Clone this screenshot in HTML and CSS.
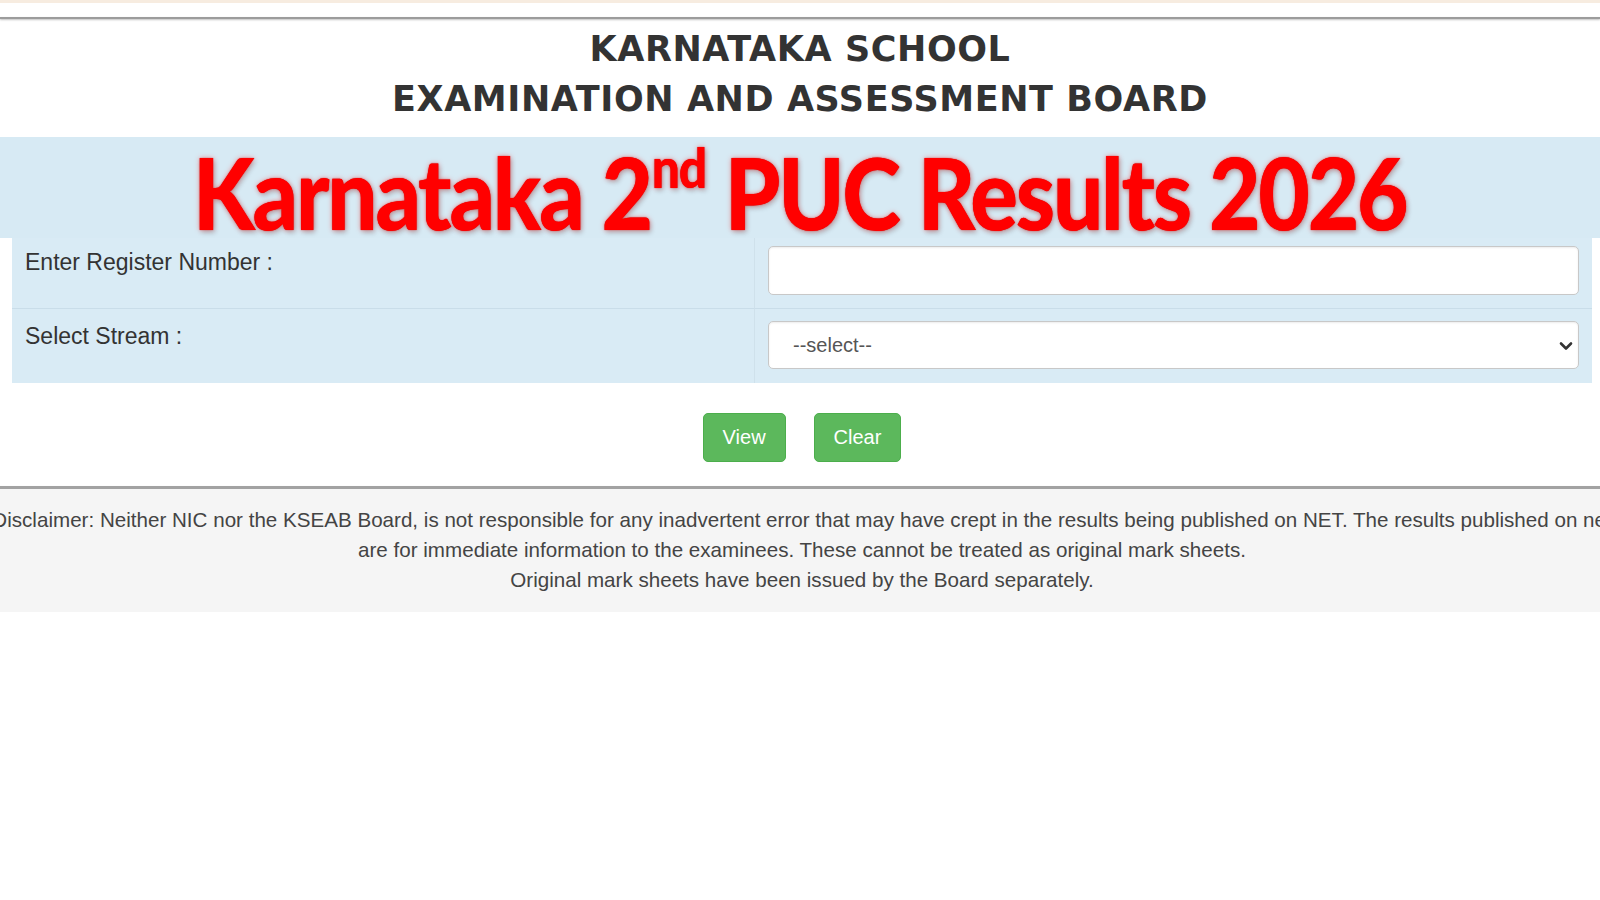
FILE: index.html
```html
<!DOCTYPE html>
<html lang="en">
<head>
<meta charset="utf-8">
<title>Karnataka 2nd PUC Results 2026</title>
<link rel="stylesheet" href="styles.css">
</head>
<body>
<div class="topstrip"></div>
<div class="topline"></div>
<header class="board">
  <div class="board-line">KARNATAKA SCHOOL</div>
  <div class="board-line">EXAMINATION AND ASSESSMENT BOARD</div>
</header>
<div class="band">
  <h1 class="title"><span class="title-text">Karnataka 2<sup class="sup">nd</sup> PUC Results 2026</span></h1>
</div>
<div class="form-table">
  <div class="row row-first">
    <div class="cell cell-label">Enter Register Number :</div>
    <div class="cell cell-field"><input class="field" type="text"></div>
  </div>
  <div class="row row-second">
    <div class="cell cell-label">Select Stream :</div>
    <div class="cell cell-field">
      <div class="select-wrap">
        <select class="field select"><option>--select--</option></select>
        <svg class="chev" width="14" height="10" viewBox="0 0 14 10"><path d="M2 2.5 L7 7.5 L12 2.5" fill="none" stroke="#333" stroke-width="2.6" stroke-linecap="round" stroke-linejoin="round"/></svg>
      </div>
    </div>
  </div>
</div>
<div class="actions">
  <button class="btn" type="button">View</button>
  <button class="btn" type="button">Clear</button>
</div>
<div class="sep"></div>
<footer class="disclaimer">
  <span class="dl">Disclaimer: Neither NIC nor the KSEAB Board, is not responsible for any inadvertent error that may have crept in the results being published on NET. The results published on net</span>
  <span class="dl">are for immediate information to the examinees. These cannot be treated as original mark sheets.</span>
  <span class="dl">Original mark sheets have been issued by the Board separately.</span>
</footer>
</body>
</html>
```
FILE: styles.css
```css
html, body {
  margin: 0;
  padding: 0;
  background: #ffffff;
  overflow-x: hidden;
}
body {
  font-family: "Liberation Sans", Arial, sans-serif;
  color: #333;
}
.topstrip {
  height: 3px;
  background: #f7ece0;
}
.topline {
  margin-top: 14px;
  height: 2px;
  background: #9c9c9c;
  box-shadow: 0 1px 2px rgba(0,0,0,0.25);
}
.board {
  height: 118px;
  box-sizing: border-box;
  padding-top: 5px;
  text-align: center;
  font-family: "DejaVu Sans", Verdana, sans-serif;
  font-weight: bold;
  font-size: 35px;
  letter-spacing: 0.6px;
  line-height: 50px;
  color: #333;
}
.band {
  height: 101px;
  box-sizing: border-box;
  padding-top: 4px;
  background: #d7eaf4;
  text-align: center;
}
.title {
  margin: 0;
  font-family: Lato, "Open Sans", sans-serif;
  font-weight: 900;
  font-size: 100px;
  line-height: 100px;
  color: #ff0000;
  white-space: nowrap;
}
.title-text {
  display: inline-block;
  letter-spacing: -2.5px;
  transform: scaleX(0.89);
  transform-origin: 50% 50%;
  text-shadow: 0 0 1px #c00000, 0 0 6px rgba(255,60,60,0.55), 2px 3px 6px rgba(0,0,0,0.18);
}
.sup {
  font-size: 56px;
  letter-spacing: -1.5px;
  vertical-align: 42px;
  line-height: 0;
  margin-left: 1px;
}
.form-table {
  margin: 0 8px 0 12px;
  background: #d9ebf5;
}
.row {
  display: grid;
  grid-template-columns: 743px 1fr;
}
.row-first .cell {
  height: 70px;
  box-sizing: border-box;
}
.row-second .cell {
  height: 75px;
  box-sizing: border-box;
  border-top: 1px solid #c9dde9;
}
.cell-label {
  padding-left: 13px;
  font-size: 23px;
  line-height: 26px;
  color: #333;
  border-right: 1px solid #cfe1eb;
}
.row-first .cell-label { padding-top: 11px; }
.row-second .cell-label { padding-top: 14px; }
.cell-field {
  padding: 0 13px 0 13px;
}
.row-first .cell-field { padding-top: 8px; }
.row-second .cell-field { padding-top: 12px; }
.field {
  display: block;
  width: 100%;
  box-sizing: border-box;
  height: 49px;
  margin: 0;
  border: 1px solid #c8c8c8;
  border-radius: 5px;
  background: #fff;
  box-shadow: inset 0 1px 2px rgba(0,0,0,0.08);
  font-family: "Liberation Sans", Arial, sans-serif;
  font-size: 20px;
  color: #555;
  outline: none;
}
.select-wrap {
  position: relative;
}
.select {
  height: 48px;
  appearance: none;
  -webkit-appearance: none;
  padding-left: 24px;
}
.chev {
  position: absolute;
  right: 6px;
  top: 20px;
}
.actions {
  display: flex;
  justify-content: center;
  gap: 28px;
  padding-top: 30px;
  padding-left: 4px;
  height: 103px;
  box-sizing: border-box;
}
.btn {
  height: 49px;
  padding: 0 19px;
  border: 1px solid #4cae4c;
  border-radius: 5px;
  background: #5cb85c;
  color: #fff;
  font-family: "Liberation Sans", Arial, sans-serif;
  font-size: 20px;
}
.sep {
  height: 3px;
  background: #a2a2a2;
  box-shadow: 0 1px 2px rgba(0,0,0,0.2);
}
.disclaimer {
  background: #f5f5f5;
  display: flex;
  flex-direction: column;
  align-items: center;
  padding: 16px 0 17px;
  font-size: 20.6px;
  line-height: 30px;
  color: #444;
  overflow: hidden;
}
.dl {
  white-space: nowrap;
  padding-left: 4px;
}
```
